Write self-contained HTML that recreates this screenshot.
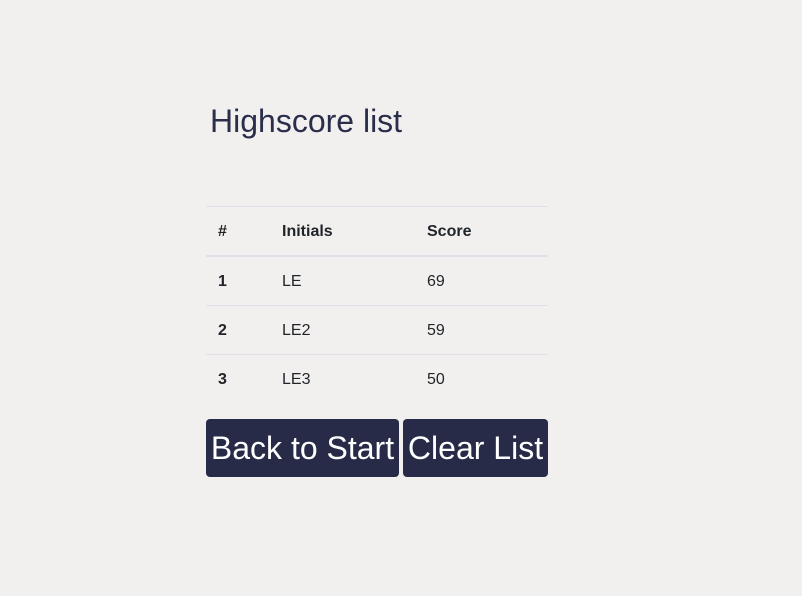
<!DOCTYPE html>
<html><head><style>
body{margin:0;background:#f2f0ef;font-family:"Liberation Sans",sans-serif;width:802px;height:596px;position:relative;overflow:hidden}
h1{position:absolute;left:210px;top:101px;margin:0;font-weight:normal;font-size:32px;color:#2a2e4b;line-height:40px}
table{position:absolute;left:206px;top:206px;width:342px;border-collapse:collapse;font-size:16px;color:#212529;table-layout:fixed}
td,th{height:47px;padding:1px 0 0 0;text-align:left;border-top:1px solid #dee2e6}
thead th{border-bottom:2px solid #dee2e6}
.c1{padding-left:12px;width:64px}.c2{width:145px}
.b{position:absolute;top:419px;height:58px;background:#272b48;color:#fff;border-radius:4px;font-size:32px;line-height:58px;text-align:center}
</style></head><body>
<h1>Highscore list</h1>
<table><thead><tr><th class="c1">#</th><th class="c2">Initials</th><th>Score</th></tr></thead>
<tbody><tr><th class="c1">1</th><td>LE</td><td>69</td></tr>
<tr><th class="c1">2</th><td>LE2</td><td>59</td></tr>
<tr><th class="c1">3</th><td>LE3</td><td>50</td></tr></tbody></table>
<div class="b" style="left:206px;width:193px">Back to Start</div>
<div class="b" style="left:403px;width:145px">Clear List</div>
</body></html>
